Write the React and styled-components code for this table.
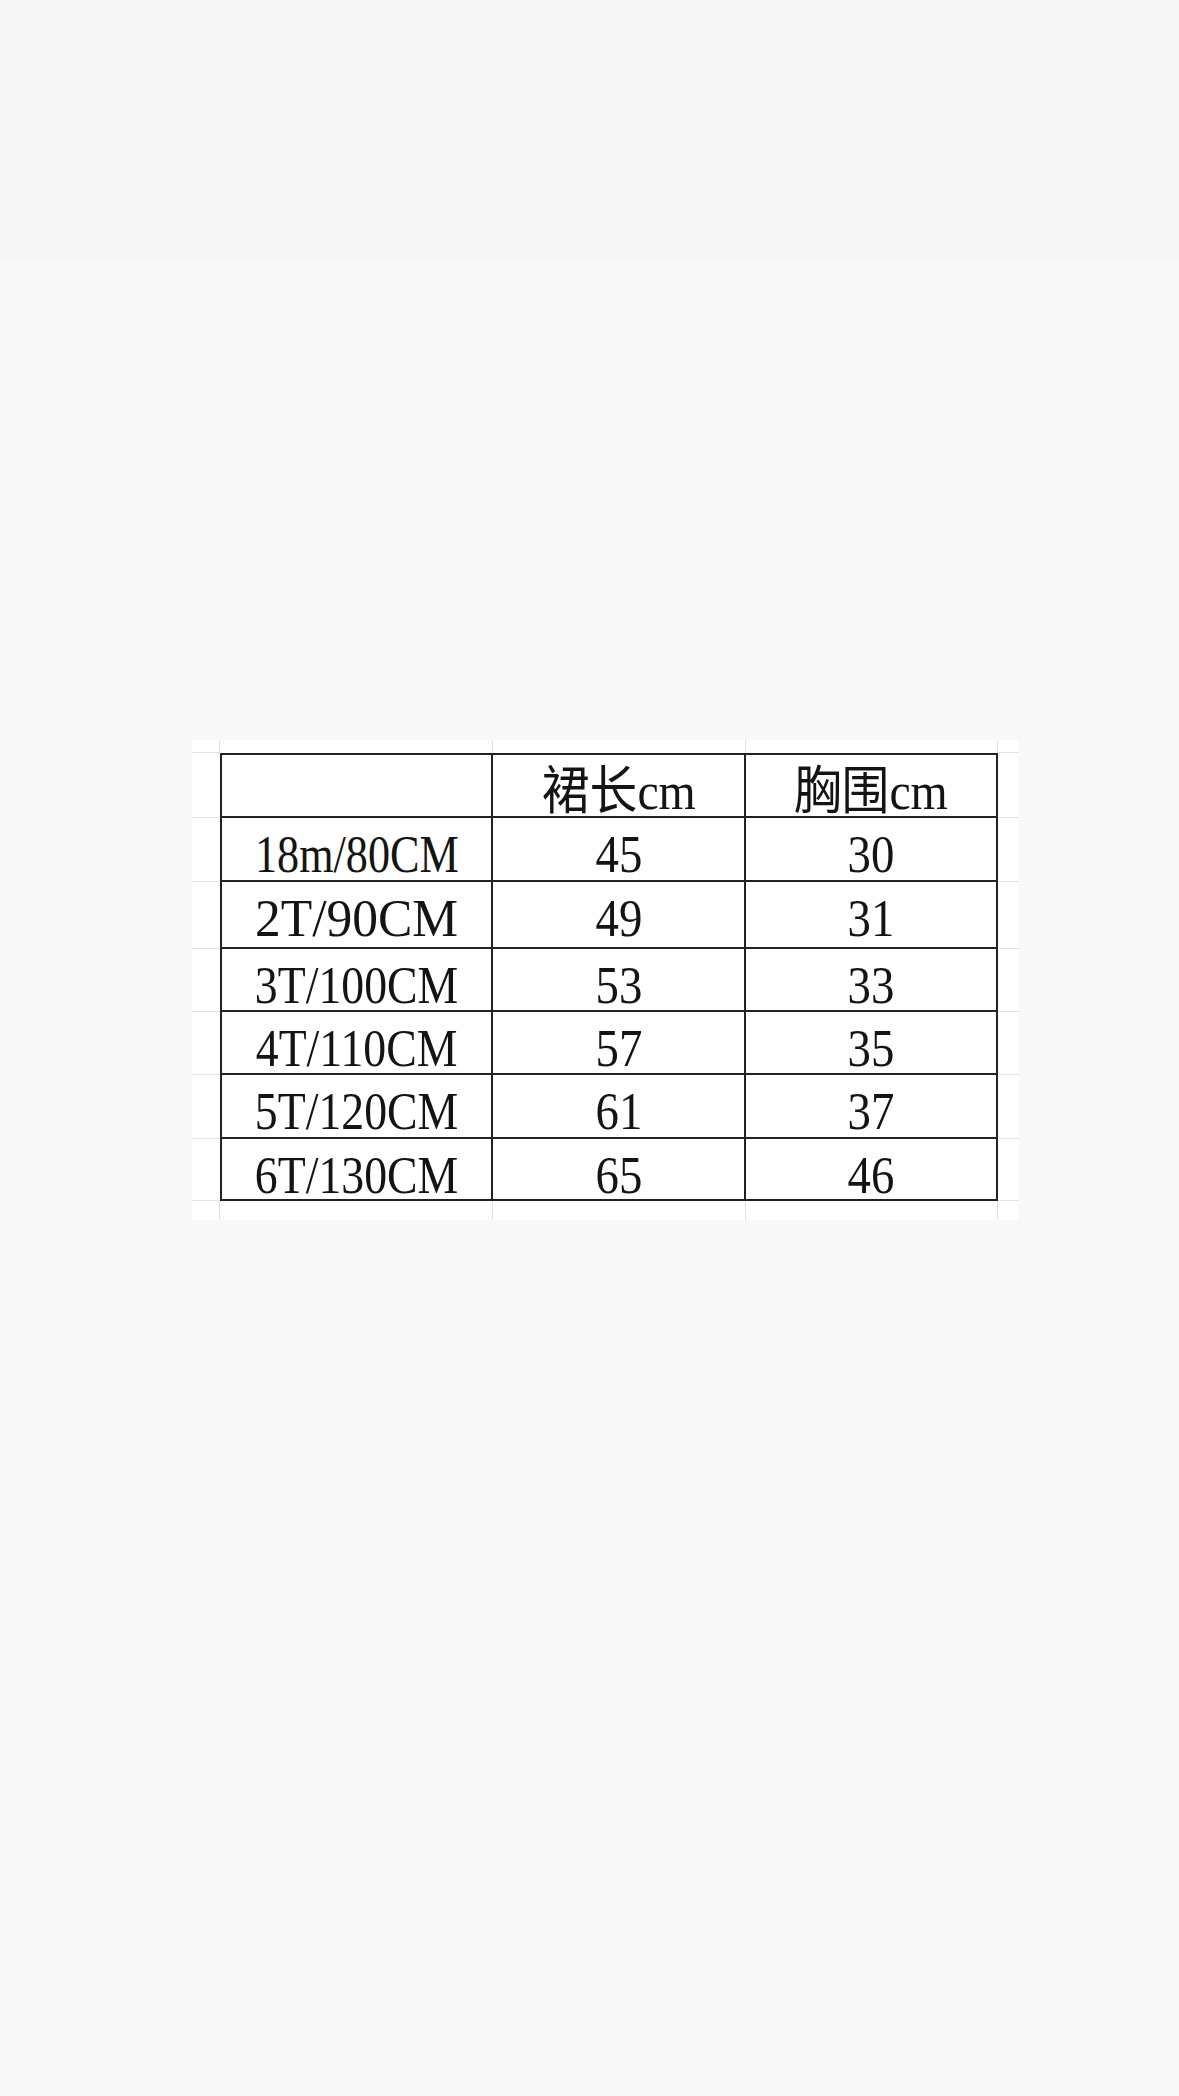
import React from "react";
import styled, { createGlobalStyle } from "styled-components";

const GlobalStyle = createGlobalStyle`
  html, body {
    margin: 0;
    padding: 0;
    background: #f8f8f8;
  }
`;

const header = ["", "裙长cm", "胸围cm"];

const sizes = [
  { label: "18m/80CM", skirt: "45", chest: "30", sx: 0.85 },
  { label: "2T/90CM", skirt: "49", chest: "31", sx: 0.99 },
  { label: "3T/100CM", skirt: "53", chest: "33", sx: 0.88 },
  { label: "4T/110CM", skirt: "57", chest: "35", sx: 0.88 },
  { label: "5T/120CM", skirt: "61", chest: "37", sx: 0.88 },
  { label: "6T/130CM", skirt: "65", chest: "46", sx: 0.88 },
];

const NUM_SX = 0.9;
const ROWS = 9;
const COLS = 5;
const GRID = "1px solid #e2e2e2";
const INK = "2px solid #222222";

export default function App() {
  const table = [
    header.map((text) => ({ text, sx: text ? 0.92 : 1 })),
    ...sizes.map((s) => [
      { text: s.label, sx: s.sx },
      { text: s.skirt, sx: NUM_SX },
      { text: s.chest, sx: NUM_SX },
    ]),
  ];

  const cells = [];
  for (let r = 0; r < ROWS; r++) {
    for (let c = 0; c < COLS; c++) {
      const inTable = r >= 1 && r <= 7 && c >= 1 && c <= 3;
      if (inTable) {
        const cell = table[r - 1][c - 1];
        cells.push(
          <TableCell key={`${r}-${c}`} $top={r === 1} $left={c === 1}>
            {cell.text && <Label $sx={cell.sx}>{cell.text}</Label>}
          </TableCell>
        );
      } else {
        // light spreadsheet gridlines around the bordered block
        const lineR = c < 4 && !(c === 0 && r >= 1 && r <= 7);
        const lineB = r < 8 && !(r === 0 && c >= 1 && c <= 3);
        cells.push(<SheetCell key={`${r}-${c}`} $lineR={lineR} $lineB={lineB} />);
      }
    }
  }

  return (
    <>
      <GlobalStyle />
      <Page>
        <TopBand />
        <Main>
          <Sheet>{cells}</Sheet>
        </Main>
      </Page>
    </>
  );
}

const Page = styled.div`
  width: 1179px;
  height: 2096px;
  display: flex;
  flex-direction: column;
  background: #f8f8f8;
`;

const TopBand = styled.div`
  height: 260px;
  flex: 0 0 auto;
  background: #f6f6f6;
`;

const Main = styled.div`
  flex: 1 1 auto;
  padding: 480px 0 0 192px;
`;

const Sheet = styled.div`
  width: 827px;
  display: grid;
  grid-template-columns: 28px 273px 253px 252px 21px;
  grid-template-rows: 13px 65px 64px 67px 63px 63px 64px 62px 19px;
  background: #ffffff;
`;

const SheetCell = styled.div`
  box-sizing: border-box;
  border-right: ${(p) => (p.$lineR ? GRID : "none")};
  border-bottom: ${(p) => (p.$lineB ? GRID : "none")};
`;

const TableCell = styled.div`
  box-sizing: border-box;
  display: flex;
  justify-content: center;
  align-items: flex-start;
  padding-top: 11px;
  border-right: ${INK};
  border-bottom: ${INK};
  border-top: ${(p) => (p.$top ? INK : "none")};
  border-left: ${(p) => (p.$left ? INK : "none")};
  font-family: "Liberation Serif", "Noto Sans CJK SC", serif;
  font-size: 52px;
  line-height: 52px;
  color: #141414;
  overflow: visible;
`;

const Label = styled.span`
  display: inline-block;
  white-space: nowrap;
  transform: scaleX(${(p) => p.$sx});
`;
